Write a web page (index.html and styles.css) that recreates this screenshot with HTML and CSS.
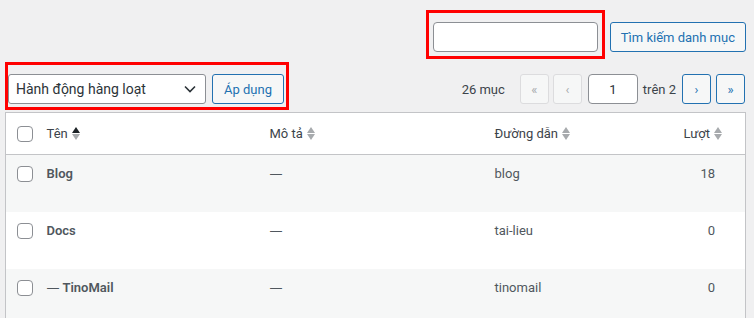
FILE: index.html
```html
<!DOCTYPE html>
<html lang="vi">
<head>
    <meta charset="UTF-8">
    <meta name="viewport" content="width=device-width, initial-scale=1.0">
    <title>Danh mục</title>
    <link rel="stylesheet" href="styles.css">
</head>
<body>
    <div class="search-row">
        <div class="mark mark-search">
            <input type="search" class="search-input">
        </div>
        <button class="btn btn-search">Tìm kiếm danh mục</button>
    </div>

    <div class="tablenav">
        <div class="mark mark-bulk">
            <select class="bulk-select">
                <option>Hành động hàng loạt</option>
                <option>Xóa</option>
            </select>
            <button class="btn">Áp dụng</button>
        </div>
        <div class="pages">
            <span class="count">26 mục</span>
            <span class="page-btn disabled">«</span>
            <span class="page-btn disabled">‹</span>
            <input type="text" class="page-input" value="1">
            <span class="total">trên 2</span>
            <a class="page-btn" href="#">›</a>
            <a class="page-btn" href="#">»</a>
        </div>
    </div>

    <table class="list">
        <thead>
            <tr>
                <th class="col-cb"><span class="cb"></span></th>
                <th class="col-name"><span class="sort">Tên <i class="arrows asc"></i></span></th>
                <th class="col-desc"><span class="sort">Mô tả <i class="arrows"></i></span></th>
                <th class="col-slug"><span class="sort">Đường dẫn <i class="arrows"></i></span></th>
                <th class="col-count"><span class="sort">Lượt <i class="arrows"></i></span></th>
            </tr>
        </thead>
        <tbody>
            <tr class="alt">
                <td class="col-cb"><span class="cb"></span></td>
                <td class="col-name"><strong>Blog</strong></td>
                <td class="col-desc"><span class="dash">—</span></td>
                <td class="col-slug">blog</td>
                <td class="col-count">18</td>
            </tr>
            <tr>
                <td class="col-cb"><span class="cb"></span></td>
                <td class="col-name"><strong>Docs</strong></td>
                <td class="col-desc"><span class="dash">—</span></td>
                <td class="col-slug">tai-lieu</td>
                <td class="col-count">0</td>
            </tr>
            <tr class="alt">
                <td class="col-cb"><span class="cb"></span></td>
                <td class="col-name"><strong><span class="dash">—</span> TinoMail</strong></td>
                <td class="col-desc"><span class="dash">—</span></td>
                <td class="col-slug">tinomail</td>
                <td class="col-count">0</td>
            </tr>
        </tbody>
    </table>
</body>
</html>
```

FILE: styles.css
```css
* {
    margin: 0;
    padding: 0;
    box-sizing: border-box;
}

body {
    background-color: #f0f0f1;
    color: #50575e;
    font-family: Roboto, "Noto Sans", sans-serif;
    font-size: 13px;
    overflow: hidden;
}

/* red annotation boxes */
.mark {
    border: 3px solid #ff0000;
}

.search-row {
    display: flex;
    justify-content: flex-end;
    align-items: flex-start;
    gap: 5px;
    padding: 10px 8px 0 0;
}

.mark-search {
    padding: 9px 4px 4px;
}

.search-input {
    display: block;
    width: 165px;
    height: 30px;
    border: 1px solid #8c8f94;
    border-radius: 4px;
    background-color: #fff;
}

.btn {
    height: 30px;
    padding: 0 10px;
    border: 1px solid #2271b1;
    border-radius: 3px;
    background-color: #f6f7f7;
    color: #2271b1;
    font-family: inherit;
    font-size: 13px;
    white-space: nowrap;
    cursor: pointer;
}

.btn-search {
    margin-top: 12px;
    min-width: 135px;
}

.tablenav {
    display: flex;
    justify-content: space-between;
    align-items: flex-start;
    padding: 3px 9px 0 5px;
}

.mark-bulk {
    display: flex;
    gap: 6px;
    padding: 9px 2px 3px 0;
}

.bulk-select {
    width: 198px;
    height: 30px;
    padding: 0 24px 0 7px;
    border: 1px solid #8c8f94;
    border-radius: 3px;
    color: #2c3338;
    font-family: inherit;
    font-size: 14px;
    appearance: none;
    background: #fff url("data:image/svg+xml;utf8,<svg xmlns='http://www.w3.org/2000/svg' width='12' height='8' viewBox='0 0 12 8'><path d='M1 1.5l5 5 5-5' fill='none' stroke='%232c3338' stroke-width='1.6'/></svg>") no-repeat right 9px center;
}

.bulk-select + .btn {
    min-width: 72px;
}

.pages {
    display: flex;
    align-items: center;
    margin-top: 12px;
    height: 30px;
}

.count {
    margin-right: 11px;
    color: #3c434a;
}

.page-btn {
    display: inline-flex;
    justify-content: center;
    align-items: center;
    width: 29px;
    height: 30px;
    border: 1px solid #2271b1;
    border-radius: 3px;
    background-color: #f6f7f7;
    color: #2271b1;
    font-size: 13px;
    text-decoration: none;
    margin-left: 5px;
}

.page-btn.disabled {
    border-color: #dcdcde;
    color: #a7aaad;
    margin-left: 4px;
}

.page-btn.disabled:first-of-type {
    margin-left: 0;
}

.page-input {
    width: 50px;
    height: 30px;
    margin-left: 6px;
    border: 1px solid #8c8f94;
    border-radius: 4px;
    background-color: #fff;
    color: #2c3338;
    font-family: inherit;
    font-size: 13px;
    text-align: center;
}

.total {
    margin: 0 1px 0 5px;
    color: #3c434a;
}

.list {
    width: 741px;
    margin: 2px 0 0 5px;
    border: 1px solid #c3c4c7;
    border-collapse: collapse;
    background-color: #fff;
    table-layout: fixed;
}

.list th,
.list td {
    text-align: left;
    vertical-align: top;
    line-height: 19px;
}

.list th {
    height: 41px;
    padding: 11px 10px;
    font-weight: normal;
    color: #3c434a;
    border-bottom: 1px solid #c3c4c7;
}

.list td {
    height: 57px;
    padding: 9px 10px;
}

.list tr.alt td {
    background-color: #f6f7f7;
}

.list strong {
    color: #50575e;
    font-weight: 600;
}

.dash {
    font-family: "Noto Sans", sans-serif;
    font-weight: normal;
}

.col-cb {
    width: 31px;
}

.list th.col-cb,
.list td.col-cb {
    padding: 0 0 0 11px;
}

.list th.col-cb .cb {
    margin-top: 13px;
}

.list td.col-cb .cb {
    margin-top: 11px;
}

.col-name {
    width: 223px;
}

.col-desc {
    width: 225px;
}

.col-slug {
    width: 185px;
}

.list th.col-count {
    text-align: right;
    padding-right: 23px;
}

.list td.col-count {
    text-align: right;
    padding-right: 30px;
}

.cb {
    display: block;
    width: 16px;
    height: 16px;
    border: 1px solid #8c8f94;
    border-radius: 4px;
    background-color: #fff;
}

.sort {
    display: inline-flex;
    align-items: center;
    gap: 4px;
}

.arrows {
    display: inline-flex;
    flex-direction: column;
    gap: 1px;
}

.arrows::before,
.arrows::after {
    content: "";
    border-left: 4.5px solid transparent;
    border-right: 4.5px solid transparent;
}

.arrows::before {
    border-bottom: 6px solid #a7aaad;
}

.arrows::after {
    border-top: 6px solid #a7aaad;
}

.arrows.asc::before {
    border-bottom-color: #1d2327;
}
```
